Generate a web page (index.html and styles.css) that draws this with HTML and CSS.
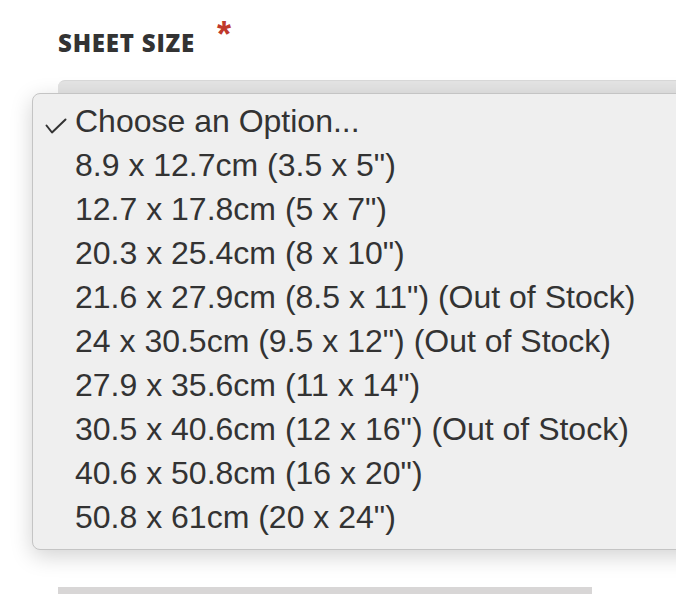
FILE: index.html
```html
<!DOCTYPE html>
<html>
<head>
<meta charset="utf-8">
<link rel="stylesheet" href="styles.css">
</head>
<body>
<div class="field">
  <div class="label-row">
    <span class="label">SHEET SIZE</span>
    <span class="req">*</span>
  </div>
  <div class="select-bar"></div>
  <div class="spacer"></div>
  <div class="next-bar"></div>
</div>
<div class="popup">
  <ul class="options">
    <li class="opt selected"><svg class="check" viewBox="0 0 22 16" width="22" height="16"><polyline points="1.5,7.5 7,14.5 20.5,1.5" fill="none" stroke="#333" stroke-width="2" stroke-linecap="round" stroke-linejoin="round"/></svg>Choose an Option...</li>
    <li class="opt">8.9 x 12.7cm (3.5 x 5")</li>
    <li class="opt">12.7 x 17.8cm (5 x 7")</li>
    <li class="opt">20.3 x 25.4cm (8 x 10")</li>
    <li class="opt">21.6 x 27.9cm (8.5 x 11") (Out of Stock)</li>
    <li class="opt">24 x 30.5cm (9.5 x 12") (Out of Stock)</li>
    <li class="opt">27.9 x 35.6cm (11 x 14")</li>
    <li class="opt">30.5 x 40.6cm (12 x 16") (Out of Stock)</li>
    <li class="opt">40.6 x 50.8cm (16 x 20")</li>
    <li class="opt">50.8 x 61cm (20 x 24")</li>
  </ul>
</div>
</body>
</html>
```

FILE: styles.css
```css
html, body {
  margin: 0;
  padding: 0;
  background: #ffffff;
  overflow: hidden;
}
body {
  width: 676px;
  height: 594px;
  position: relative;
  font-family: "Liberation Sans", Arial, sans-serif;
}
.field {
  padding: 28px 0 0 58px;
}
.label-row {
  display: flex;
  align-items: flex-start;
  height: 30px;
}
.label {
  font-family: "Open Sans", "Liberation Sans", sans-serif;
  font-weight: 800;
  font-size: 24px;
  line-height: 30px;
  color: #333333;
  letter-spacing: 0.8px;
}
.req {
  color: #c0392b;
  font-size: 36px;
  font-weight: 700;
  line-height: 20px;
  margin-left: 22px;
  margin-top: -3px;
}
.select-bar {
  margin-top: 22px;
  height: 40px;
  background: #e4e4e4;
  border-top-left-radius: 7px;
  border-top: 1px solid #d8d8d8;
}
.spacer {
  height: 466px;
}
.next-bar {
  width: 534px;
  height: 10px;
  background: #d8d6d6;
}
.popup {
  position: absolute;
  left: 32px;
  top: 93px;
  width: 700px;
  height: 455px;
  background: #efefef;
  border: 1px solid #c4c4c4;
  border-radius: 8px;
  box-shadow: 0 6px 22px rgba(0, 0, 0, 0.18);
}
.options {
  list-style: none;
  margin: 0;
  padding: 5px 0 0 0;
}
.opt {
  position: relative;
  height: 44px;
  line-height: 44px;
  padding-left: 42px;
  font-family: "Liberation Sans", Arial, sans-serif;
  font-size: 32px;
  color: #333333;
  white-space: nowrap;
}
.check {
  position: absolute;
  left: 12px;
  top: 19px;
}
```
